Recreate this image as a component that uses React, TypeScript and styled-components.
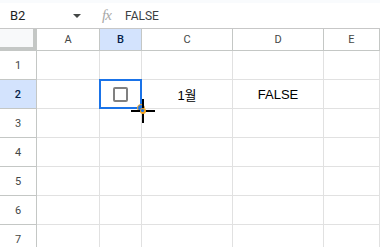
import React from "react";
import styled, { createGlobalStyle } from "styled-components";

const GlobalStyle = createGlobalStyle`
  html, body {
    margin: 0;
    padding: 0;
    background: #fff;
    overflow: hidden;
  }
  body {
    font-family: Roboto, "Liberation Sans", Arial, sans-serif;
  }
`;

const Page = styled.div`
  width: 380px;
  height: 247px;
  overflow: hidden;
  background: #fff;
`;

const TopStrip = styled.div`
  height: 3px;
  background: #f9fbfd;
`;

const FormulaBar = styled.div`
  height: 25px;
  display: flex;
  align-items: center;
  border-bottom: 1px solid #c7c7c7;
  color: #1f1f1f;
`;

const NameBox = styled.div`
  width: 90px;
  display: flex;
  align-items: center;
  justify-content: space-between;
  padding: 0 9px 0 10px;
  box-sizing: border-box;
  font-size: 13px;
`;

const Caret = styled.span`
  width: 0;
  height: 0;
  border-left: 4px solid transparent;
  border-right: 4px solid transparent;
  border-top: 4px solid #444746;
`;

const Fx = styled.span`
  margin-left: 12px;
  width: 16px;
  font-family: "Liberation Serif", serif;
  font-style: italic;
  font-size: 15px;
  color: #a8a8a8;
  letter-spacing: -1px;
`;

const FormulaText = styled.span`
  margin-left: 7px;
  font-size: 12px;
  color: #3c4043;
`;

const Grid = styled.div`
  display: grid;
  grid-template-columns: 37px 63px 42px 91px 91px 1fr;
  grid-template-rows: 22px repeat(7, 29px);
`;

const Corner = styled.div`
  background: #f8f9fa;
  border-right: 4px solid #c4c7c5;
  border-bottom: 4px solid #c4c7c5;
  box-sizing: border-box;
`;

const ColHeader = styled.div<{ $active?: boolean }>`
  display: flex;
  align-items: center;
  justify-content: center;
  box-sizing: border-box;
  border-right: 1px solid #c4c7c5;
  border-bottom: 1px solid #c4c7c5;
  background: ${(p) => (p.$active ? "#d3e3fd" : "#fff")};
  color: ${(p) => (p.$active ? "#041e49" : "#444746")};
  font-weight: ${(p) => (p.$active ? 500 : 400)};
  font-size: 11px;
`;

const RowHeader = styled.div<{ $active?: boolean }>`
  display: flex;
  align-items: center;
  justify-content: center;
  box-sizing: border-box;
  border-right: 1px solid #c4c7c5;
  border-bottom: 1px solid #c4c7c5;
  background: ${(p) => (p.$active ? "#d3e3fd" : "#fff")};
  color: ${(p) => (p.$active ? "#041e49" : "#444746")};
  font-weight: ${(p) => (p.$active ? 500 : 400)};
  font-size: 11px;
`;

const Cell = styled.div`
  position: relative;
  display: flex;
  align-items: center;
  justify-content: center;
  box-sizing: border-box;
  border-right: 1px solid #e1e1e1;
  border-bottom: 1px solid #e1e1e1;
  font-family: "Liberation Sans", Arial, "Noto Sans CJK KR", sans-serif;
  font-size: 13px;
  color: #000;
`;

const Checkbox = styled.span`
  width: 15px;
  height: 15px;
  box-sizing: border-box;
  border: 2px solid #808080;
  border-radius: 2px;
  margin-top: 1px;
`;

const Selection = styled.div`
  position: absolute;
  left: -1px;
  top: -1px;
  right: -1px;
  bottom: -1px;
  border: 2px solid #1a73e8;
  pointer-events: none;
`;

const FillHandle = styled.div`
  position: absolute;
  right: -4px;
  bottom: -4px;
  width: 6px;
  height: 6px;
  border-radius: 50%;
  background: #1a73e8;
  border: 1px solid #f5a623;
`;

const Cursor = styled.svg`
  position: absolute;
  right: -15px;
  bottom: -16px;
  z-index: 2;
`;

const columns = ["A", "B", "C", "D", "E"];
const rows = [1, 2, 3, 4, 5, 6, 7];

export default function App() {
  return (
    <Page>
      <GlobalStyle />
      <TopStrip />
      <FormulaBar>
        <NameBox>
          B2
          <Caret />
        </NameBox>
        <Fx>fx</Fx>
        <FormulaText>FALSE</FormulaText>
      </FormulaBar>
      <Grid>
        <Corner />
        {columns.map((c) => (
          <ColHeader key={c} $active={c === "B"}>
            {c}
          </ColHeader>
        ))}
        {rows.map((r) => (
          <React.Fragment key={r}>
            <RowHeader $active={r === 2}>{r}</RowHeader>
            {columns.map((c) => {
              if (r === 2 && c === "B") {
                return (
                  <Cell key={c}>
                    <Checkbox />
                    <Selection />
                    <FillHandle />
                    <Cursor width="26" height="26" viewBox="0 0 26 26">
                      <rect x="12" y="1" width="2" height="24" fill="#000" />
                      <rect x="1" y="12" width="24" height="2" fill="#000" />
                      <circle cx="13" cy="13" r="3" fill="#f5a623" />
                      <circle cx="12.5" cy="12.5" r="1.6" fill="#1a73e8" />
                    </Cursor>
                  </Cell>
                );
              }
              if (r === 2 && c === "C") return <Cell key={c}>1월</Cell>;
              if (r === 2 && c === "D") return <Cell key={c}>FALSE</Cell>;
              return <Cell key={c} />;
            })}
          </React.Fragment>
        ))}
      </Grid>
    </Page>
  );
}
